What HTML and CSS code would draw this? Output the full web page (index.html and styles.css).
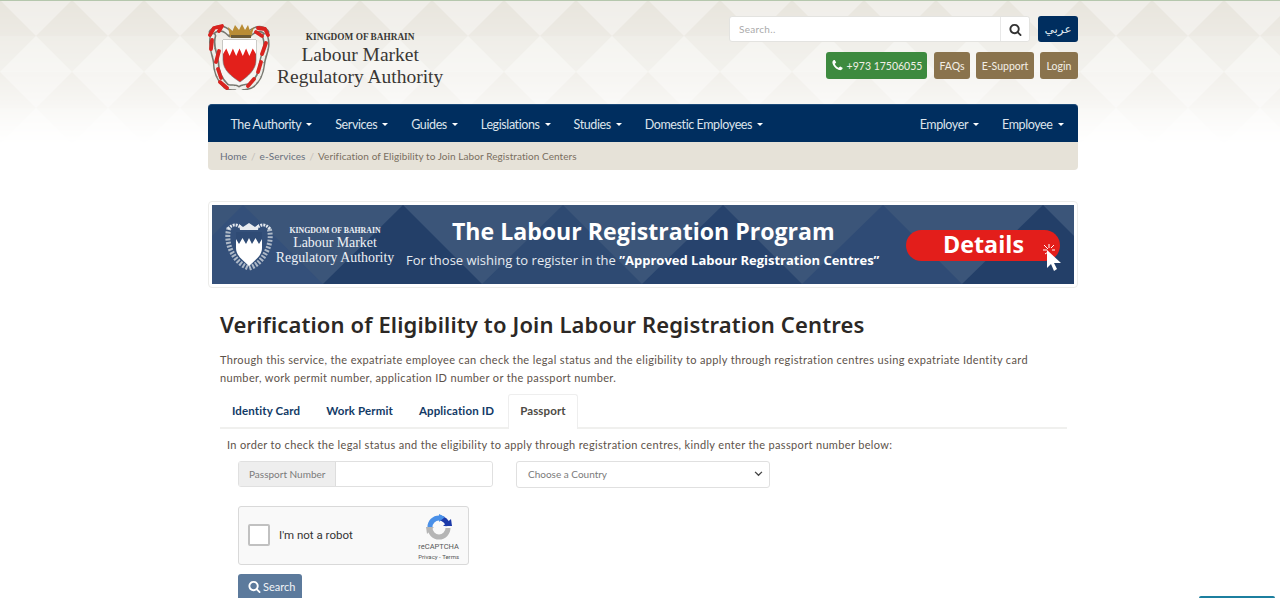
FILE: index.html
```html
<!DOCTYPE html>
<html lang="en">
<head>
<meta charset="utf-8">
<title>Verification of Eligibility to Join Labour Registration Centres</title>
<link rel="stylesheet" href="styles.css">
</head>
<body>
<svg class="bg-pattern" width="1280" height="145" aria-hidden="true">
  <defs>
    <linearGradient id="fade" x1="0" y1="0" x2="0" y2="1">
      <stop offset="0" stop-color="#fff" stop-opacity="1"/>
      <stop offset=".5" stop-color="#fff" stop-opacity=".6"/>
      <stop offset="1" stop-color="#fff" stop-opacity="0"/>
    </linearGradient>
    <mask id="fadeMask"><rect width="1280" height="145" fill="url(#fade)"/></mask>
    <pattern id="lattice" x="36" y="0" width="72" height="72" patternUnits="userSpaceOnUse">
      <rect width="72" height="72" fill="#f0eee9"/>
      <polygon points="36,0 72,36 0,36" fill="#e8e5dd"/>
      <polygon points="36,72 72,36 0,36" fill="#ebe9e2"/>
      <polygon points="0,36 36,72 0,72" fill="#f2f1ec"/>
      <polygon points="72,36 72,72 36,72" fill="#f2f1ec"/>
    </pattern>
  </defs>
  <rect width="1280" height="145" fill="url(#lattice)" mask="url(#fadeMask)"/>
</svg>
<div class="top-line"></div>
<div class="container">
  <header class="site-header">
    <a class="logo" href="#">
      <svg class="emblem" width="62" height="66" viewBox="0 0 62 66" aria-hidden="true">
        <g fill="none" stroke-linecap="round" stroke-linejoin="round">
          <path d="M4 8 C9 3 16 3 22 10 M58 8 C53 3 47 5 41 10 M5 12 C2 22 7 30 8 38 C8 47 11 55 18 62 C22 65 27 62 30 65 M57 12 C61 24 55 30 54 40 C53 50 50 56 44 61 C40 64 35 62 32 65" stroke="#77776f" stroke-width="6.500"/>
          <path d="M4 8 C9 3 16 3 22 10 M58 8 C53 3 47 5 41 10 M5 12 C2 22 7 30 8 38 C8 47 11 55 18 62 C22 65 27 62 30 65 M57 12 C61 24 55 30 54 40 C53 50 50 56 44 61 C40 64 35 62 32 65" stroke="#eeeeea" stroke-width="3.400" stroke-dasharray="5 2"/>
          <path d="M2 11 L6 4 L14 2 L11 7 M4 16 L3 25 M11 27 L8 38 M10 45 L13 54 M12 58 L19 64 M50 4 L57 5 L60 11 M54 12 L48 8 M58 19 L54 30 M53 38 L50 48 M46 55 L40 62" stroke="#d9231f" stroke-width="3.800"/>
        </g>
        <path d="M22 13 L20 3 L24.500 7 L27 1 L31 6 L34 0 L37 6 L40 1 L42 7 L46 3 L43 13 Z" fill="#b98c35"/>
        <rect x="23" y="11" width="20" height="3" fill="#6c5a35"/>
        <path d="M15 16 H48 V36 C48 46 40 52 32 58 C23 52 15 46 15 36 Z" fill="#e3201b" stroke="#6d6d6d" stroke-width=".6"/>
        <path d="M15 16 H48 V30 L44.700 24.500 L41.400 32 L38.100 24.500 L34.800 32 L31.500 24.500 L28.200 32 L24.900 24.500 L21.600 32 L18.300 24.500 L15 30 Z" fill="#fff"/>
      </svg>
      <span class="logo-text">
        <span class="logo-small">KINGDOM OF BAHRAIN</span>
        <span class="logo-big">Labour Market</span>
        <span class="logo-big">Regulatory Authority</span>
      </span>
    </a>
    <div class="header-tools">
      <div class="tool-row">
        <div class="search-group">
          <input class="search-input" type="text" placeholder="Search..">
          <button class="search-btn" type="button" aria-label="Search">
            <svg width="13" height="13" viewBox="0 0 1792 1792"><path fill="#333" d="M1216 832q0-185-131.500-316.500t-316.500-131.500-316.500 131.500-131.500 316.500 131.500 316.500 316.500 131.500 316.500-131.500 131.500-316.500zm512 832q0 52-38 90t-90 38q-54 0-90-38l-343-342q-179 124-399 124-143 0-273.500-55.500t-225-150-150-225-55.500-273.500 55.500-273.500 150-225 225-150 273.500-55.500 273.500 55.500 225 150 150 225 55.500 273.500q0 220-124 399l343 343q37 37 37 90z"/></svg>
          </button>
        </div>
        <a class="btn btn-navy" href="#" lang="ar">عربي</a>
      </div>
      <div class="tool-row tool-row-links">
        <a class="btn btn-green" href="#">
          <svg width="13" height="13" viewBox="0 0 1792 1792"><path fill="#fff" d="M1600 1240q0 27-10 70.500t-21 68.500q-21 50-122 106-94 51-186 51-27 0-53-3.500t-57.500-12.500-47-14.500-55.500-20.500-49-18q-98-35-175-83-127-79-264-216t-216-264q-48-77-83-175-3-9-18-49t-20.500-55.500-14.500-47-12.500-57.500-3.500-53q0-92 51-186 56-101 106-122 25-11 68.500-21t70.500-10q14 0 21 3 18 6 53 76 11 19 30 54t35 63.500 31 53.500q3 4 17.500 25t21.500 35.500 7 28.500q0 20-28.500 50t-62 55-62 53-28.500 46q0 9 5 22.500t8.500 20.500 14 24 11.500 19q76 137 174 235t235 174q2 1 19 11.500t24 14 20.500 8.500 22.500 5q18 0 46-28.500t53-62 55-62 50-28.500q14 0 28.500 7t35.500 21.500 25 17.500q25 15 53.500 31t63.500 35 54 30q70 35 76 53 3 7 3 21z"/></svg>
          +973 17506055</a>
        <a class="btn btn-brown btn-faq" href="#">FAQs</a>
        <a class="btn btn-brown btn-support" href="#">E-Support</a>
        <a class="btn btn-brown btn-login" href="#">Login</a>
      </div>
    </div>
  </header>

  <nav class="main-nav">
    <ul class="nav-list">
      <li><a href="#">The Authority<i class="caret"></i></a></li>
      <li><a href="#">Services<i class="caret"></i></a></li>
      <li><a href="#">Guides<i class="caret"></i></a></li>
      <li><a href="#">Legislations<i class="caret"></i></a></li>
      <li><a href="#">Studies<i class="caret"></i></a></li>
      <li><a href="#">Domestic Employees<i class="caret"></i></a></li>
    </ul>
    <ul class="nav-list">
      <li><a href="#">Employer<i class="caret"></i></a></li>
      <li><a href="#">Employee<i class="caret"></i></a></li>
    </ul>
  </nav>
  <ol class="breadcrumb">
    <li><a href="#">Home</a></li>
    <li class="sep">/</li>
    <li><a href="#">e-Services</a></li>
    <li class="sep">/</li>
    <li class="current">Verification of Eligibility to Join Labor Registration Centers</li>
  </ol>

  <a class="banner-frame" href="#">
    <svg class="banner" width="862" height="79" viewBox="0 0 862 79" role="img" aria-label="The Labour Registration Program">
      <rect width="862" height="79" fill="#3b5579"/>
      <polygon points="31,0 111,79 0,79 0,31" fill="#34507a"/>
      <polygon points="191,0 270,79 111,79" fill="#233f68"/>
      <polygon points="351,0 430,79 270,79" fill="#2e4a72"/>
      <polygon points="511,0 590,79 430,79" fill="#27436d"/>
      <polygon points="671,0 750,79 590,79" fill="#2f4b75"/>
      <polygon points="831,0 862,31 862,79 750,79" fill="#233f68"/>
      <g transform="translate(13 17)">
        <path d="M4 6 C1 16 4 26 8 32 C11 38 17 44 24 46 C31 44 37 38 40 32 C44 26 47 16 44 6" fill="none" stroke="#aeb9c7" stroke-width="5" stroke-dasharray="2 1.500"/>
        <path d="M3 7 C8 1 13 2 17 7 M45 7 C40 1 35 2 31 7" fill="none" stroke="#e4e9ef" stroke-width="3" stroke-dasharray="2 1"/>
        <path d="M15 8 L14 2 L18 5 L24 1 L30 5 L34 2 L33 8 Z" fill="#e8ecf1"/>
        <path d="M11 10 H37 V26 C37 34 30 38 24 44 C18 38 11 34 11 26 Z" fill="#fff"/>
        <path d="M11 10 H37 V17 L34 22 L30.500 16 L27 22 L24 16 L21 22 L17.500 16 L14 22 L11 17 Z" fill="#2f4b75"/>
      </g>
      <text class="b-serif-s" x="123" y="27.500" text-anchor="middle">KINGDOM OF BAHRAIN</text>
      <text class="b-serif" x="123" y="42" text-anchor="middle">Labour Market</text>
      <text class="b-serif" x="123" y="57" text-anchor="middle">Regulatory Authority</text>
      <text class="b-title" x="240" y="35">The Labour Registration Program</text>
      <text class="b-sub" x="194" y="60">For those wishing to register in the <tspan class="b-sub-b">”Approved Labour Registration Centres”</tspan></text>
      <rect x="694" y="25" width="154" height="31" rx="15.500" fill="#e31e1b"/>
      <text class="b-details" x="731" y="48">Details</text>
      <path d="M832 40 L836 44 M837 39 V43 M842 40 L839 43 M831 45 H835 M843 45 H840 M833 49 L836 47" stroke="#fff" stroke-width="1"/>
      <path d="M835 45 L835 63 L839 59 L842 66 L845 64 L842 58 L849 58 Z" fill="#fff"/>
    </svg>
  </a>

  <main class="content">
    <h1 class="page-title">Verification of Eligibility to Join Labour Registration Centres</h1>
    <p class="intro">Through this service, the expatriate employee can check the legal status and the eligibility to apply through registration centres using expatriate Identity card number, work permit number, application ID number or the passport number.</p>
    <ul class="tabs">
      <li><a href="#">Identity Card</a></li>
      <li><a href="#">Work Permit</a></li>
      <li><a href="#">Application ID</a></li>
      <li class="active"><a href="#">Passport</a></li>
    </ul>
    <p class="instruction">In order to check the legal status and the eligibility to apply through registration centres, kindly enter the passport number below:</p>
    <div class="form-row">
      <div class="input-group">
        <span class="input-label">Passport Number</span>
        <input class="input-field" type="text" aria-label="Passport Number">
      </div>
      <div class="select-box">
        <span>Choose a Country</span>
        <svg width="9" height="6" viewBox="0 0 10 7"><path d="M1 1 L5 5 L9 1" fill="none" stroke="#444" stroke-width="1.500"/></svg>
      </div>
    </div>
    <div class="recaptcha">
      <span class="rc-check"></span>
      <span class="rc-label">I'm not a robot</span>
      <div class="rc-brand">
        <svg width="26" height="26" viewBox="0 0 26 26" aria-hidden="true">
          <path d="M4 14 A9 9 0 0 0 22 14" fill="none" stroke="#b5b5b5" stroke-width="5"/>
          <path d="M4 13 A9 9 0 0 1 13 4 L16 4 " fill="none" stroke="#4a90e8" stroke-width="5"/>
          <path d="M13 4 A9 9 0 0 1 22 12" fill="none" stroke="#1c3aa9" stroke-width="5"/>
          <polygon points="0,13 8,13 1,20" fill="#b5b5b5"/>
          <polygon points="13,0 13,8 19,3" fill="#4a90e8"/>
          <polygon points="17,12 26,12 25,5" fill="#1c3aa9"/>
        </svg>
        <span class="rc-name">reCAPTCHA</span>
        <span class="rc-terms">Privacy - Terms</span>
      </div>
    </div>
    <button class="search-submit" type="button">
      <svg width="13" height="13" viewBox="0 0 1792 1792"><path fill="#fff" d="M1216 832q0-185-131.500-316.500t-316.500-131.500-316.500 131.500-131.500 316.500 131.500 316.500 316.500 131.500 316.500-131.500 131.500-316.500zm512 832q0 52-38 90t-90 38q-54 0-90-38l-343-342q-179 124-399 124-143 0-273.500-55.500t-225-150-150-225-55.500-273.500 55.500-273.500 150-225 225-150 273.500-55.500 273.500 55.500 225 150 150 225 55.500 273.500q0 220-124 399l343 343q37 37 37 90z"/></svg>
      Search
    </button>
  </main>
</div>
<div class="chat-tab"></div>
</body>
</html>
```
FILE: styles.css
```css
* { box-sizing: border-box; }
html, body { margin: 0; padding: 0; height: 598px; overflow: hidden; }
body { background: #fff; font-family: Lato, "Noto Sans", sans-serif; color: #5a4f45; font-size: 11px; position: relative; }
a { text-decoration: none; color: inherit; }
ul, ol { list-style: none; margin: 0; padding: 0; }
.bg-pattern { position: absolute; left: 0; top: 0; z-index: 0; }
.top-line { position: absolute; left: 0; top: 0; width: 100%; height: 1px; background: #b5c7ad; z-index: 1; }
.container { position: relative; z-index: 2; width: 870px; margin: 0 0 0 208px; }

.site-header { display: flex; justify-content: space-between; height: 104px; padding-top: 16px; }
.logo { display: flex; align-items: flex-start; padding-top: 8px; }
.logo-text { display: flex; flex-direction: column; align-items: center; margin-left: 7px; margin-top: 6px; font-family: "Liberation Serif", serif; color: #3a3835; }
.logo-small { font-size: 9.300px; font-weight: bold; line-height: 13px; margin-top: 1px; }
.logo-big { font-size: 19.500px; line-height: 21px; }
.logo-big + .logo-big { margin-top: 1px; }
.header-tools { display: flex; flex-direction: column; gap: 10px; align-items: flex-end; }
.tool-row { display: flex; gap: 8px; }
.tool-row-links { gap: 7px; }
.search-group { display: flex; width: 301px; height: 26px; background: #fff; border: 1px solid #e3e3e0; border-radius: 3px; }
.search-input { flex: 1; min-width: 0; border: 0; background: transparent; padding: 0 9px; font: 10px Lato, sans-serif; letter-spacing: .3px; outline: 0; }
.search-input::placeholder { color: #aaa; }
.search-btn { width: 29px; border: 0; border-left: 1px solid #e8e8e8; background: #fff; padding: 0; display: flex; align-items: center; justify-content: center; border-radius: 0 3px 3px 0; }
.btn { display: flex; align-items: center; justify-content: center; height: 27px; border-radius: 3px; color: #f3efe6; font-size: 10.500px; white-space: nowrap; }
.btn-navy { width: 40px; height: 26px; background: #002e5f; color: #dfe6ee; font-size: 12px; font-family: "DejaVu Sans", sans-serif; }
.btn-green { width: 101px; background: #3d8a3f; gap: 3px; }
.btn-brown { background: #8a734d; }
.btn-faq { width: 36px; }
.btn-support { width: 58px; margin-left: -1px; }
.btn-login { width: 38px; margin-left: -1px; }

.main-nav { display: flex; justify-content: space-between; height: 38px; padding: 1px 3px 0 11px; background: #002e5f; border-radius: 4px 4px 0 0; border-top: 1px solid #1d4a78; }
.nav-list { display: flex; align-items: center; }
.nav-list a { display: flex; align-items: center; padding: 0 11.500px; color: #dde4ec; font-size: 12.500px; letter-spacing: -.4px; }
.caret { display: inline-block; width: 0; height: 0; margin-left: 5px; border-top: 3px solid #fff; border-left: 3px solid transparent; border-right: 3px solid transparent; }
.breadcrumb { display: flex; align-items: center; height: 28px; padding: 0 12px; background: #e6e2d8; border-radius: 0 0 4px 4px; font-size: 10px; letter-spacing: .07px; color: #666f7d; gap: 4px; }
.breadcrumb .sep { color: #c4c0b8; }
.breadcrumb .current { color: #7a6f60; }

.banner-frame { display: block; margin-top: 31px; height: 87px; padding: 3px; border: 1px solid #ececea; border-radius: 4px; background: #fff; }
.banner { display: block; }
.b-serif-s { font: bold 7.800px "Liberation Serif", serif; fill: #eef1f5; }
.b-serif { font: 13.900px "Liberation Serif", serif; fill: #eef1f5; }
.b-title { font: bold 23.100px "Open Sans", "Noto Sans", sans-serif; fill: #fff; }
.b-sub { font: 13px "Open Sans", "Noto Sans", sans-serif; fill: #e6ebf1; }
.b-sub-b { font-weight: bold; fill: #fff; }
.b-details { font: bold 23.300px "Open Sans", "Noto Sans", sans-serif; fill: #fff; }

.content { padding: 0 12px; }
.page-title { margin: 21px 0 0; font-family: "Noto Sans", sans-serif; font-size: 22px; line-height: 30px; font-weight: 600; color: #2c2825; letter-spacing: .13px; white-space: nowrap; }
.intro { margin: 12px 0 0; line-height: 18px; letter-spacing: .35px; color: #5d524a; }
.tabs { display: flex; margin-top: 7px; height: 35px; border-bottom: 2px solid #f0f0ee; width: 847px; }
.tabs li { display: flex; align-items: center; padding: 0 11px 4px; margin-right: 2px; height: 35px; border: 1px solid transparent; border-bottom: 0; font-size: 11.500px; font-weight: 700; letter-spacing: .13px; color: #123a66; }
.tabs li.active { border-color: #eee; border-radius: 3px 3px 0 0; background: #fff; color: #4e4a44; }
.instruction { margin: 8px 0 0 7px; line-height: 16px; letter-spacing: .34px; color: #5d524a; white-space: nowrap; }
.form-row { display: flex; gap: 23px; margin: 8px 0 0 18px; }
.input-group { display: flex; width: 255px; height: 26px; border: 1px solid #e0e0e0; border-radius: 3px; }
.input-label { display: flex; align-items: center; width: 97px; padding-left: 10px; background: #eee; border-right: 1px solid #ddd; font-size: 10px; color: #7b7b7b; white-space: nowrap; }
.input-field { flex: 1; min-width: 0; border: 0; outline: 0; background: #fff; border-radius: 0 3px 3px 0; }
.select-box { display: flex; align-items: center; justify-content: space-between; width: 254px; height: 27px; padding: 0 6px 1px 11px; border: 1px solid #e0e0e0; border-radius: 3px; font-size: 10px; color: #7a7a7a; }
.recaptcha { display: flex; align-items: center; width: 231px; height: 59px; margin: 18px 0 0 18px; padding: 0 9px 2px; background: #f9f9f9; border: 1px solid #d9d9d9; border-radius: 3px; font-family: Roboto, Arial, sans-serif; position: relative; }
.rc-check { width: 22px; height: 22px; background: #fff; border: 2px solid #c1c1c1; border-radius: 2px; }
.rc-label { margin-left: 9px; font-size: 11.500px; color: #333; }
.rc-brand { position: absolute; right: 9px; top: 7px; display: flex; flex-direction: column; align-items: center; color: #555; }
.rc-name { font-size: 7.500px; line-height: 10px; margin-top: 2px; }
.rc-terms { font-size: 6px; line-height: 9px; }
.search-submit { display: flex; align-items: flex-start; gap: 2px; width: 64px; height: 30px; margin: 9px 0 0 18px; padding: 6px 0 0 10px; border: 0; border-radius: 3px 3px 0 0; background: #5c7a9c; color: #f1f4f7; font: 11px Lato, sans-serif; }
.chat-tab { position: fixed; left: 1199px; bottom: 0; width: 76px; height: 2px; background: #1c7f9f; border-radius: 4px 4px 0 0; z-index: 3; }
```
